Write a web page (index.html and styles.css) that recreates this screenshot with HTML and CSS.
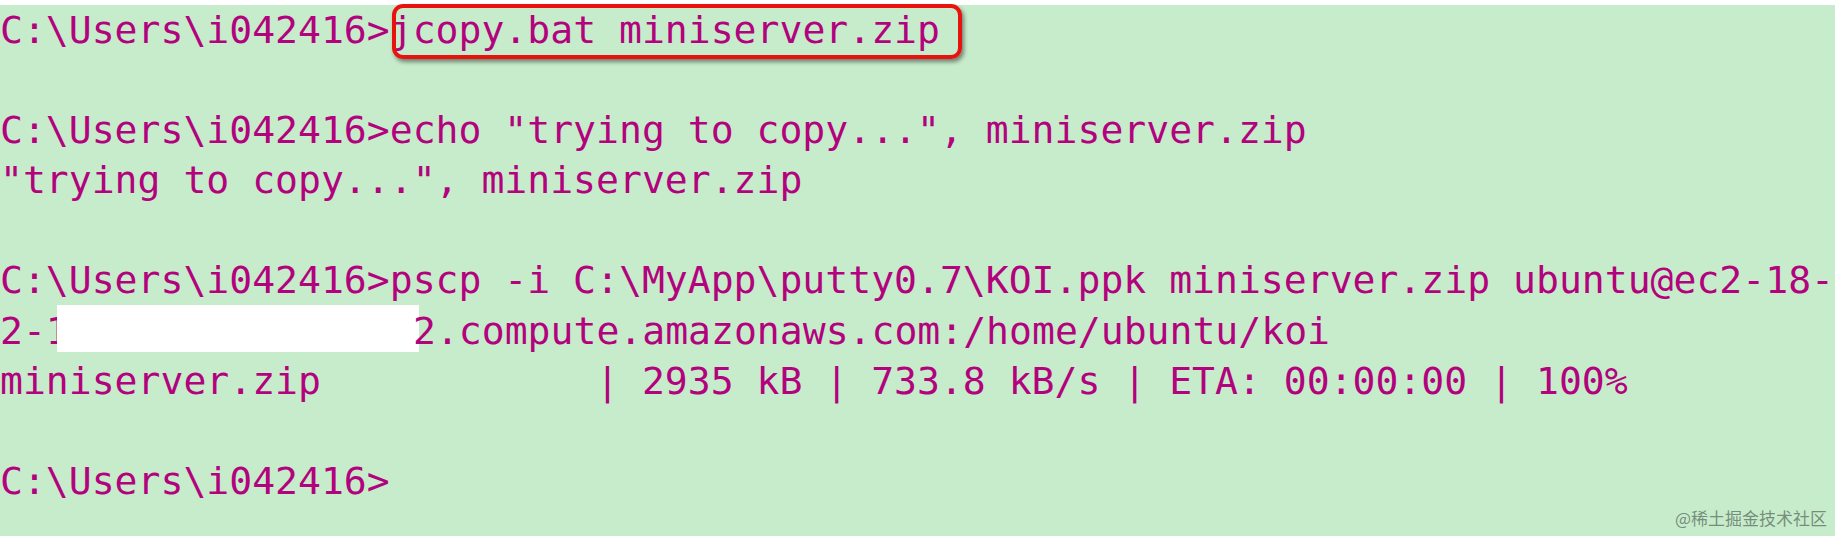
FILE: index.html
```html
<!DOCTYPE html>
<html lang="en">
<head>
  <meta charset="UTF-8">
  <meta name="viewport" content="width=device-width, initial-scale=1.0">
  <title>Command Prompt - pscp</title>
  <link rel="stylesheet" href="styles.css">
</head>
<body>
  <div class="screen">
    <pre class="console">C:\Users\i042416&gt;<span class="highlight">jcopy.bat miniserver.zip</span>

C:\Users\i042416&gt;echo "trying to copy...", miniserver.zip
"trying to copy...", miniserver.zip

C:\Users\i042416&gt;pscp -i C:\MyApp\putty0.7\KOI.ppk miniserver.zip ubuntu@ec2-18-
2-1<span class="redacted"></span>2.compute.amazonaws.com:/home/ubuntu/koi
miniserver.zip            | 2935 kB | 733.8 kB/s | ETA: 00:00:00 | 100%

C:\Users\i042416&gt;</pre>
    <div class="watermark">@稀土掘金技术社区</div>
  </div>
</body>
</html>
```

FILE: styles.css
```css
html,
body {
  margin: 0;
  height: 100%;
}

body {
  background: #c7eccb;
  overflow: hidden;
}

.screen {
  position: relative;
  height: 100%;
  border-top: 5px solid #ffffff;
  box-sizing: border-box;
}

.console {
  margin: 0;
  padding: 0;
  font-family: "DejaVu Sans Mono", "Liberation Mono", monospace;
  font-size: 38.1px;
  line-height: 50px;
  color: #b3027d;
  white-space: pre;
}

/* red marker drawn round the typed command */
.highlight {
  position: relative;
}

.highlight::after {
  content: '';
  position: absolute;
  left: 2px;
  right: -22px;
  top: -4px;
  bottom: -7px;
  border: 4px solid #e8130f;
  border-radius: 11px;
  box-shadow: 2px 3px 4px rgba(0, 0, 0, 0.45);
}

/* host name blanked out with a white box */
.redacted {
  display: inline-block;
  width: 362px;
  height: 47px;
  margin-left: -11.8px;
  margin-right: -6px;
  vertical-align: -8px;
  background: #ffffff;
}

.watermark {
  position: absolute;
  right: 8px;
  bottom: 6px;
  font-family: "Noto Sans CJK SC", sans-serif;
  font-size: 17px;
  color: rgba(90, 110, 95, 0.75);
}
```
